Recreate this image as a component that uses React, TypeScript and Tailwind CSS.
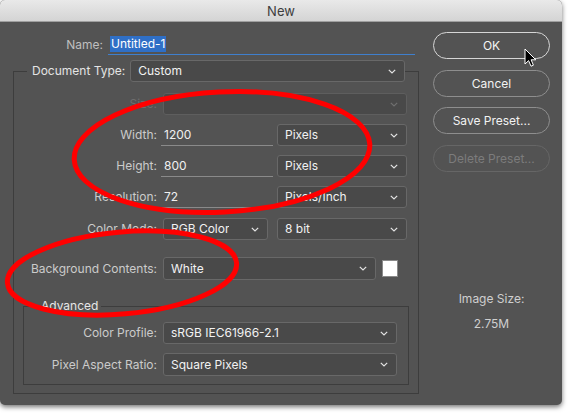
import React from "react";

const Chevron = ({ dim }: { dim?: boolean }) => (
  <svg width="8" height="5" viewBox="0 0 8 5" className="shrink-0">
    <path d="M0.8 0.8 L4 4 L7.2 0.8" fill="none" stroke={dim ? "#707070" : "#e4e4e4"} strokeWidth="1.2" />
  </svg>
);

function Select({ value, className = "", dim = false }: { value?: string; className?: string; dim?: boolean }) {
  return (
    <div
      className={`flex h-[22px] items-center justify-between rounded-[3px] border bg-[#494949] pl-[7px] pr-[8px] ${
        dim ? "border-[#5e5e5e]" : "border-[#686868]"
      } ${className}`}
    >
      <span className="truncate text-[#f2f2f2]">{value}</span>
      <Chevron dim={dim} />
    </div>
  );
}

function Button({ label, variant }: { label: string; variant: "default" | "normal" | "disabled" }) {
  const cls =
    variant === "default"
      ? "border-[#d6d6d6] text-[#f5f5f5]"
      : variant === "normal"
      ? "border-[#8e8e8e] text-[#f2f2f2]"
      : "border-[#666666] text-[#7c7c7c]";
  return (
    <div className={`flex h-[27px] items-center justify-center rounded-full border ${cls}`}>{label}</div>
  );
}

function NumRow({ label, value, unit, className = "" }: { label: string; value: string; unit: string; className?: string }) {
  return (
    <div className={`flex h-[22px] items-center ${className}`}>
      <div className="w-[143px] text-right text-[#cbcbcb]">{label}</div>
      <div className="ml-[4px] flex h-[22px] w-[112px] items-center border-b border-[#8a8a8a] pl-[3px] text-[#f0f0f0]">
        {value}
      </div>
      <Select value={unit} className="ml-[4px] w-[130px]" />
    </div>
  );
}

export default function App() {
  return (
    <div
      className="relative h-[413px] w-[568px] overflow-hidden bg-white text-[12px] leading-[16px]"
      style={{ fontFamily: "Inter, 'Liberation Sans', sans-serif" }}
    >
      <div className="h-[405px] w-[562px] overflow-hidden rounded-[5px] bg-[#535353] shadow-[0_2px_5px_rgba(0,0,0,0.55)]">
        {/* Title bar */}
        <div className="flex h-[22px] items-center justify-center border-b border-[#9f9f9f] bg-gradient-to-b from-[#e9e9e9] to-[#d4d4d4] text-[13px] text-[#3d3d3d]">
          New
        </div>

        {/* Body */}
        <div className="flex">
          {/* Left column */}
          <div className="flex w-[433px] flex-col pl-[13px] pr-[14px] pt-[12px]">
            {/* Name */}
            <div className="flex h-[21px] items-center">
              <div className="w-[90px] text-right text-[#bfbfbf]">Name:</div>
              <div className="ml-[5px] flex h-[21px] w-[307px] items-center border-b border-[#3f7fcd] pl-[2px]">
                <span className="bg-[#2f6fc6] px-[1px] leading-[16px] text-white">Untitled-1</span>
              </div>
            </div>

            {/* Outer group */}
            <div className="mt-[5px] flex h-[22px]">
              <div className="h-[11px] w-[14px] self-end border-l border-t border-[#3d3d3d]" />
              <div className="flex items-center pl-[5px] pr-[5px] text-[#e4e4e4]">Document Type:</div>
              <Select value="Custom" className="flex-1" />
              <div className="h-[11px] w-[14px] self-end border-r border-t border-[#3d3d3d]" />
            </div>
            <div className="flex flex-col border-x border-b border-[#3d3d3d]">
              <div className="mt-[11px] flex h-[22px] items-center">
                <div className="w-[143px] text-right text-[#6e6e6e]">Size:</div>
                <Select className="ml-[6px] w-[244px]" dim />
              </div>
              <NumRow className="mt-[9px]" label="Width:" value="1200" unit="Pixels" />
              <NumRow className="mt-[9px]" label="Height:" value="800" unit="Pixels" />
              <NumRow className="mt-[9px]" label="Resolution:" value="72" unit="Pixels/Inch" />
              <div className="mt-[10px] flex h-[22px] items-center">
                <div className="w-[143px] text-right text-[#cbcbcb]">Color Mode:</div>
                <Select value="RGB Color" className="ml-[6px] w-[105px]" />
                <Select value="8 bit" className="ml-[9px] w-[130px]" />
              </div>
              <div className="mt-[17px] flex h-[23px] items-center">
                <div className="w-[143px] text-right text-[#cbcbcb]">Background Contents:</div>
                <Select value="White" className="ml-[6px] h-[23px] w-[213px]" />
                <div className="ml-[6px] h-[17px] w-[16px] border border-[#8a8a8a] bg-white" />
              </div>

              {/* Advanced */}
              <div className="mx-[9px] mb-[8px] mt-[19px] flex flex-col">
                <div className="flex h-[14px]">
                  <div className="h-[7px] w-[15px] self-end border-l border-t border-[#3d3d3d]" />
                  <div className="px-[3px] leading-[14px] text-[#e6e6e6]">Advanced</div>
                  <div className="h-[7px] flex-1 self-end border-r border-t border-[#3d3d3d]" />
                </div>
                <div className="flex flex-col border-x border-b border-[#3d3d3d] pb-[8px] pt-[9px]">
                  <div className="flex h-[22px] items-center">
                    <div className="w-[133px] text-right text-[#cbcbcb]">Color Profile:</div>
                    <Select value="sRGB IEC61966-2.1" className="ml-[6px] w-[234px]" />
                  </div>
                  <div className="mt-[9px] flex h-[23px] items-center">
                    <div className="w-[133px] text-right text-[#cbcbcb]">Pixel Aspect Ratio:</div>
                    <Select value="Square Pixels" className="ml-[6px] h-[23px] w-[234px]" />
                  </div>
                </div>
              </div>
            </div>
          </div>

          {/* Right column */}
          <div className="flex w-[117px] flex-col pt-[10px]">
            <Button label="OK" variant="default" />
            <div className="mt-[11px]">
              <Button label="Cancel" variant="normal" />
            </div>
            <div className="mt-[10px]">
              <Button label="Save Preset..." variant="normal" />
            </div>
            <div className="mt-[11px]">
              <Button label="Delete Preset..." variant="disabled" />
            </div>
            <div className="mt-[119px] text-center text-[#cfcfcf]">Image Size:</div>
            <div className="mt-[9px] text-center text-[#cfcfcf]">2.75M</div>
          </div>
        </div>
      </div>

      {/* Annotation ellipses */}
      <svg className="pointer-events-none absolute left-0 top-0" width="568" height="413" viewBox="0 0 568 413">
        <ellipse cx="222" cy="152" rx="148" ry="60" transform="rotate(-3 222 152)" fill="none" stroke="#ff0000" strokeWidth="5" />
        <ellipse cx="122" cy="273" rx="115" ry="41" transform="rotate(-5 122 273)" fill="none" stroke="#ff0000" strokeWidth="5" />
      </svg>

      {/* Mouse cursor */}
      <svg className="pointer-events-none absolute left-[524px] top-[48px]" width="13" height="20" viewBox="0 0 13 20">
        <path d="M1 1 L1 16 L4.6 12.6 L7 18.2 L9.4 17.2 L7.1 11.8 L11.8 11.8 Z" fill="#000" stroke="#fff" strokeWidth="1" strokeLinejoin="round" />
      </svg>
    </div>
  );
}
